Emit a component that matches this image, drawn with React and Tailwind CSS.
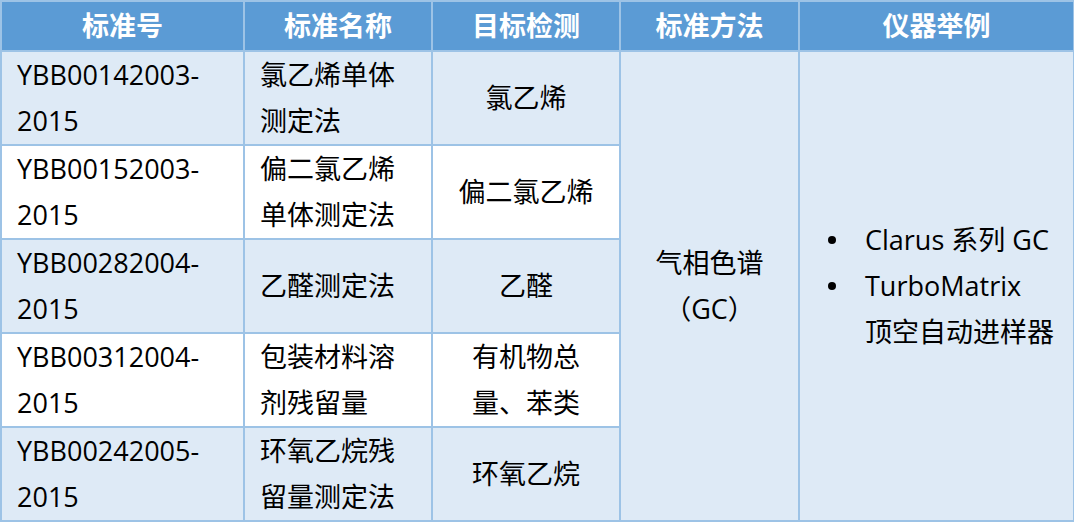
const rows = [
  { code: ["YBB00142003-", "2015"], name: ["氯乙烯单体", "测定法"], target: ["氯乙烯"], tint: true },
  { code: ["YBB00152003-", "2015"], name: ["偏二氯乙烯", "单体测定法"], target: ["偏二氯乙烯"], tint: false },
  { code: ["YBB00282004-", "2015"], name: ["乙醛测定法"], target: ["乙醛"], tint: true },
  { code: ["YBB00312004-", "2015"], name: ["包装材料溶", "剂残留量"], target: ["有机物总", "量、苯类"], tint: false },
  { code: ["YBB00242005-", "2015"], name: ["环氧乙烷残", "留量测定法"], target: ["环氧乙烷"], tint: true },
];

const lines = (arr) =>
  arr.map((t, i) => (
    <span key={i} className="block">
      {t}
    </span>
  ));

const Dot = () => (
  <span className="w-[38px] shrink-0 flex items-center h-[46px]">
    <span className="w-[8px] h-[8px] rounded-full bg-black ml-[1px]" />
  </span>
);

export default function App() {
  return (
    <div
      className="w-[1074px] h-[523px] bg-white overflow-hidden"
      style={{ fontFamily: '"Open Sans", "Noto Sans CJK SC", sans-serif' }}
    >
      <table className="table-fixed border-collapse w-[1073px] text-[27px] leading-[46px] text-black">
        <colgroup>
          <col className="w-[243px]" />
          <col className="w-[188px]" />
          <col className="w-[188px]" />
          <col className="w-[179px]" />
          <col className="w-[275px]" />
        </colgroup>
        <thead>
          <tr className="h-[50px] bg-[#5b9bd5] text-white font-bold">
            {["标准号", "标准名称", "目标检测", "标准方法", "仪器举例"].map((h) => (
              <th key={h} className="border-2 border-[#9dc3e6] text-center font-bold p-0">
                {h}
              </th>
            ))}
          </tr>
        </thead>
        <tbody>
          {rows.map((r, i) => (
            <tr key={i} className={`h-[94px] ${r.tint ? "bg-[#deeaf6]" : "bg-white"}`}>
              <td className="border-2 border-[#9dc3e6] pl-[15px] pr-2 p-0 align-middle">{lines(r.code)}</td>
              <td className="border-2 border-[#9dc3e6] pl-[15px] pr-2 p-0 align-middle">{lines(r.name)}</td>
              <td className="border-2 border-[#9dc3e6] px-2 p-0 text-center align-middle">{lines(r.target)}</td>
              {i === 0 && (
                <>
                  <td rowSpan={5} className="border-2 border-[#9dc3e6] bg-[#deeaf6] text-center align-middle">
                    <span className="block">气相色谱</span>
                    <span className="block">（GC）</span>
                  </td>
                  <td rowSpan={5} className="border-2 border-[#9dc3e6] bg-[#deeaf6] align-middle pl-[27px]">
                    <ul>
                      <li className="flex">
                        <Dot />
                        <span>Clarus 系列 GC</span>
                      </li>
                      <li className="flex">
                        <Dot />
                        <span>
                          <span className="block">TurboMatrix</span>
                          <span className="block">顶空自动进样器</span>
                        </span>
                      </li>
                    </ul>
                  </td>
                </>
              )}
            </tr>
          ))}
        </tbody>
      </table>
    </div>
  );
}
